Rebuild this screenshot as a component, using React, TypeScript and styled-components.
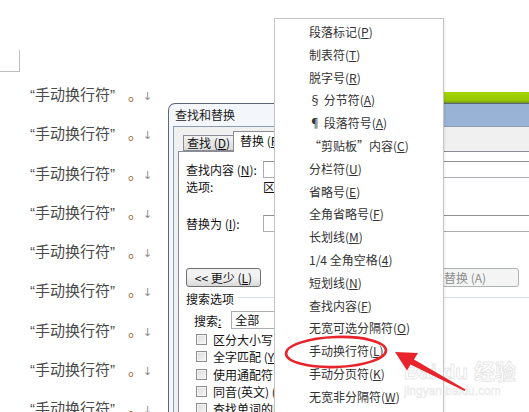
import { FC } from "react";
import styled, { createGlobalStyle } from "styled-components";

const GlobalStyle = createGlobalStyle`
  html, body {
    margin: 0;
    padding: 0;
    background: #ffffff;
    overflow: hidden;
  }
`;

const CJK = `"Noto Sans CJK SC", "Noto Sans", sans-serif`;

const menuItems = [
  { label: "段落标记", key: "P" },
  { label: "制表符", key: "T" },
  { label: "脱字号", key: "R" },
  { label: "§ 分节符", key: "A" },
  { label: "¶ 段落符号", key: "A" },
  { label: "“剪贴板”内容", key: "C" },
  { label: "分栏符", key: "U" },
  { label: "省略号", key: "E" },
  { label: "全角省略号", key: "F" },
  { label: "长划线", key: "M" },
  { label: "1/4 全角空格", key: "4" },
  { label: "短划线", key: "N" },
  { label: "查找内容", key: "F" },
  { label: "无宽可选分隔符", key: "O" },
  { label: "手动换行符", key: "L" },
  { label: "手动分页符", key: "K" },
  { label: "无宽非分隔符", key: "W" },
];

const options = [
  { label: "区分大小写", key: "H" },
  { label: "全字匹配", key: "Y" },
  { label: "使用通配符", key: "U" },
  { label: "同音(英文)", key: "K" },
  { label: "查找单词的所有形式(英文)", key: "W" },
];

const App: FC = () => {
  return (
    <>
      <GlobalStyle />
      <Screen>
        <Page>
          <CornerMark />
          <Lines>
            {Array.from({ length: 9 }).map((_, i) => (
              <DocLine key={i}>
                <span>“手动换行符”</span>
                <Period>。</Period>
                <BreakMark>↓</BreakMark>
              </DocLine>
            ))}
          </Lines>
        </Page>

        <RibbonStripe />

        <Dialog>
          <TitleBar>查找和替换</TitleBar>
          <Client>
            <TabStrip>
              <Tab>
                查找 (<u>D</u>)
              </Tab>
              <Tab $active>
                替换 (<u>P</u>)
              </Tab>
              <Tab>
                定位 (<u>G</u>)
              </Tab>
            </TabStrip>
            <TabPanel>
              <FieldRow>
                <FieldLabel>
                  查找内容 (<u>N</u>):
                </FieldLabel>
                <TextBox />
              </FieldRow>
              <InfoRow>
                <FieldLabel>选项:</FieldLabel>
                <span>区分全/半角</span>
              </InfoRow>
              <FieldRow $top={21}>
                <FieldLabel>
                  替换为 (<u>I</u>):
                </FieldLabel>
                <TextBox />
              </FieldRow>
              <ButtonRow>
                <Button $width={73}>
                  &lt;&lt; 更少 (<u>L</u>)
                </Button>
                <Button $width={80} $push={34} $disabled>
                  替换 (R)
                </Button>
                <Button $width={130} $push={10} $disabled>
                  全部替换 (A)
                </Button>
                <Button $width={90} $push={10} $disabled>
                  查找下一处 (F)
                </Button>
              </ButtonRow>
              <GroupTitle>
                <span>搜索选项</span>
              </GroupTitle>
              <SearchRow>
                <span>
                  搜索<u>:</u>
                </span>
                <SelectBox>全部</SelectBox>
              </SearchRow>
              <CheckList>
                {options.map((o) => (
                  <CheckRow key={o.label}>
                    <CheckBox />
                    <span>
                      {o.label} (<u>{o.key}</u>)
                    </span>
                  </CheckRow>
                ))}
              </CheckList>
            </TabPanel>
          </Client>
        </Dialog>

        <Menu>
          {menuItems.map((item, i) => (
            <MenuItem key={i}>
              {item.label}(<u>{item.key}</u>)
            </MenuItem>
          ))}
        </Menu>

        <Watermark>
          <WatermarkLogo>Bai du 经验</WatermarkLogo>
          <WatermarkUrl>jingyan.baidu.com</WatermarkUrl>
        </Watermark>

        <Annotation viewBox="0 0 529 412" width="529" height="412">
          <ellipse
            cx="336"
            cy="352"
            rx="50"
            ry="15"
            fill="none"
            stroke="#e8232b"
            strokeWidth="2.6"
            transform="rotate(-2 336 352)"
          />
          <polygon
            points="395,352 418,353 414,359.5 465.5,389.5 464.5,391 410.5,364.5 407,370.5"
            fill="#e8232b"
          />
        </Annotation>
      </Screen>
    </>
  );
};

export default App;

const Screen = styled.div`
  position: relative;
  width: 529px;
  height: 412px;
  overflow: hidden;
  background: #ffffff;
  font-family: ${CJK};
`;

const Page = styled.div`
  display: flex;
  flex-direction: column;
  padding-top: 50px;
`;

const CornerMark = styled.div`
  width: 19px;
  height: 21px;
  border-right: 1px solid #bdbdbd;
  border-bottom: 1px solid #bdbdbd;
`;

const Lines = styled.div`
  display: flex;
  flex-direction: column;
  margin-top: 2px;
  padding-left: 30px;
`;

const DocLine = styled.div`
  display: flex;
  align-items: baseline;
  height: 39.3px;
  line-height: 39.3px;
  font-family: "Liberation Sans", "Noto Sans CJK SC", sans-serif;
  font-size: 15px;
  color: #4a4a4a;
  white-space: nowrap;
`;

const Period = styled.span`
  margin-left: 13px;
  font-family: ${CJK};
  font-size: 15px;
  color: #9a5d2a;
`;

const BreakMark = styled.span`
  margin-left: 0;
  font-family: "DejaVu Sans", sans-serif;
  font-size: 11px;
  color: #8c8c8c;
`;

const RibbonStripe = styled.div`
  position: absolute;
  left: 430px;
  right: 0;
  top: 92px;
  height: 11px;
  background: linear-gradient(#a6d608, #94c400 80%, #6f8f2a);
`;

const Dialog = styled.div`
  position: absolute;
  z-index: 1;
  left: 168px;
  top: 103px;
  width: 470px;
  height: 330px;
  display: flex;
  flex-direction: column;
  border: 1px solid #5d6877;
  border-bottom: none;
  border-radius: 7px 7px 0 0;
  background: linear-gradient(
      to right,
      rgba(243, 246, 250, 1) 0,
      rgba(243, 246, 250, 1) 110px,
      rgba(243, 246, 250, 0) 270px
    ),
    linear-gradient(#97b1d5, #c0d3ea);
  font-size: 12px;
  color: #111;
`;

const TitleBar = styled.div`
  height: 22px;
  line-height: 22px;
  padding-left: 6px;
  font-size: 12px;
  color: #1a1a1a;
`;

const Client = styled.div`
  flex: 1;
  margin: 0 4px;
  padding: 5px 0 0 4px;
  display: flex;
  flex-direction: column;
  background: #f0f0f0;
  border-top: 1px solid #8d9bb0;
  border-left: 1px solid #8d9bb0;
`;

const TabStrip = styled.div`
  display: flex;
  align-items: flex-end;
  padding-left: 5px;
  height: 19px;
  position: relative;
  z-index: 1;
`;

const Tab = styled.div<{ $active?: boolean }>`
  height: ${(p) => (p.$active ? 20 : 14)}px;
  line-height: ${(p) => (p.$active ? 18 : 14)}px;
  padding: 0 ${(p) => (p.$active ? 6 : 3)}px;
  margin-bottom: ${(p) => (p.$active ? -1 : 0)}px;
  border: 1px solid #898c95;
  border-bottom: ${(p) => (p.$active ? "none" : "1px solid #898c95")};
  background: ${(p) =>
    p.$active ? "#ffffff" : "linear-gradient(#f2f2f2, #dcdcdc)"};
  font-size: 12px;
  white-space: nowrap;

  & + & {
    margin-left: -1px;
  }
`;

const TabPanel = styled.div`
  flex: 1;
  display: flex;
  flex-direction: column;
  padding: 9px 0 0 7px;
  background: #ffffff;
  border: 1px solid #898c95;
  border-right: none;
`;

const FieldRow = styled.div<{ $top?: number }>`
  display: flex;
  align-items: center;
  height: 17px;
  margin-top: ${(p) => p.$top ?? 0}px;
`;

const FieldLabel = styled.span`
  width: 77px;
  flex: none;
  white-space: nowrap;
`;

const TextBox = styled.div`
  width: 300px;
  height: 15px;
  border: 1px solid #abadb3;
  border-top-color: #8e8f8f;
  background: #ffffff;
`;

const InfoRow = styled.div`
  display: flex;
  align-items: center;
  height: 16px;
`;

const ButtonRow = styled.div`
  display: flex;
  align-items: center;
  margin-top: 36px;
  height: 19px;
`;

const Button = styled.div<{ $width: number; $push?: number; $disabled?: boolean }>`
  flex: none;
  width: ${(p) => p.$width}px;
  height: 17px;
  margin-left: ${(p) => p.$push ?? 0}px;
  display: flex;
  align-items: center;
  justify-content: center;
  border: 1px solid ${(p) => (p.$disabled ? "#adb2b5" : "#707070")};
  border-radius: 3px;
  background: ${(p) =>
    p.$disabled ? "#f4f4f4" : "linear-gradient(#f2f2f2 45%, #dadada)"};
  color: ${(p) => (p.$disabled ? "#8d8d8d" : "#111")};
  font-size: 12px;
  white-space: nowrap;
`;

const GroupTitle = styled.div`
  display: flex;
  align-items: center;
  gap: 4px;
  height: 16px;
  margin-top: 3px;

  &::after {
    content: "";
    flex: 1;
    height: 1px;
    margin-top: -2px;
    background: #d5dfe5;
  }
`;

const SearchRow = styled.div`
  display: flex;
  align-items: center;
  gap: 10px;
  margin-top: 5px;
  padding-left: 8px;
  height: 18px;
`;

const SelectBox = styled.div`
  width: 120px;
  height: 16px;
  line-height: 16px;
  padding-left: 3px;
  border: 1px solid #abadb3;
  background: #ffffff;
`;

const CheckList = styled.div`
  display: flex;
  flex-direction: column;
  margin-top: 2px;
  padding-left: 10px;
`;

const CheckRow = styled.div`
  display: flex;
  align-items: center;
  gap: 6px;
  height: 17.3px;
  white-space: nowrap;
`;

const CheckBox = styled.div`
  width: 9px;
  height: 9px;
  border: 1px solid #8f8f8f;
  background: linear-gradient(135deg, #dcdcdc, #f6f6f6);
  box-shadow: inset 0 0 0 1px #f4f4f4;
`;

const Menu = styled.div`
  position: absolute;
  z-index: 2;
  left: 274px;
  top: 18px;
  width: 170px;
  height: 420px;
  padding-top: 2px;
  display: flex;
  flex-direction: column;
  background: #ffffff;
  border: 1px solid #c4c4c4;
  box-sizing: border-box;
  box-shadow: 1px 1px 2px rgba(0, 0, 0, 0.08);
`;

const MenuItem = styled.div`
  height: 22.8px;
  line-height: 22.8px;
  padding-left: 34px;
  font-family: ${CJK};
  font-size: 12px;
  color: #333333;
  white-space: nowrap;
`;

const Watermark = styled.div`
  position: absolute;
  z-index: 3;
  left: 404px;
  top: 360px;
  display: flex;
  flex-direction: column;
  align-items: flex-start;
  pointer-events: none;
`;

const WatermarkLogo = styled.div`
  font-family: "Liberation Sans", ${CJK};
  font-size: 21px;
  line-height: 24px;
  font-weight: 700;
  color: rgba(255, 255, 255, 0.5);
  -webkit-text-stroke: 1px rgba(200, 200, 200, 0.45);
  white-space: nowrap;
`;

const WatermarkUrl = styled.div`
  font-family: "Liberation Sans", sans-serif;
  font-size: 12px;
  line-height: 14px;
  color: rgba(255, 255, 255, 0.5);
  -webkit-text-stroke: 0.6px rgba(200, 200, 200, 0.45);
  white-space: nowrap;
`;

const Annotation = styled.svg`
  position: absolute;
  z-index: 4;
  left: 0;
  top: 0;
  pointer-events: none;
`;
